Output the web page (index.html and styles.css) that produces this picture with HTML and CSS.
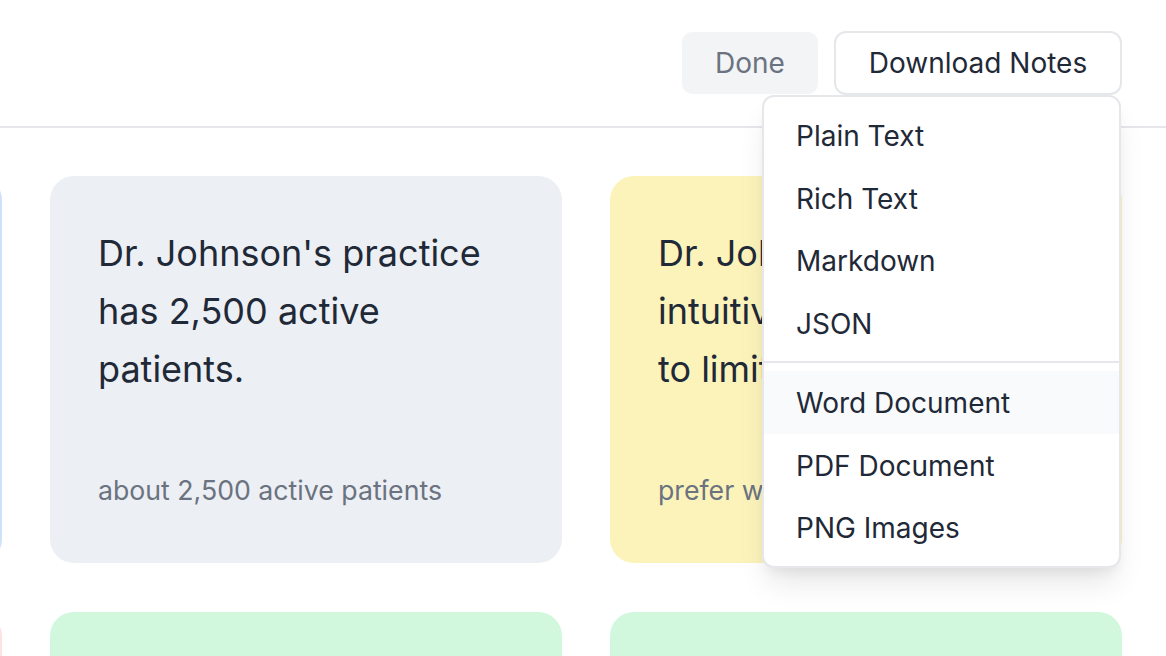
FILE: index.html
```html
<!DOCTYPE html>
<html lang="en">
<head>
<meta charset="utf-8">
<title>Notes</title>
<link rel="stylesheet" href="styles.css">
</head>
<body>
<header class="topbar">
  <div class="actions">
    <button class="btn btn-done">Done</button>
    <div class="menu-wrap">
      <button class="btn btn-download">Download Notes</button>
      <div class="menu">
        <div class="menu-item">Plain Text</div>
        <div class="menu-item">Rich Text</div>
        <div class="menu-item">Markdown</div>
        <div class="menu-item">JSON</div>
        <div class="menu-divider"></div>
        <div class="menu-item active">Word Document</div>
        <div class="menu-item">PDF Document</div>
        <div class="menu-item">PNG Images</div>
      </div>
    </div>
  </div>
</header>
<main class="board">
  <div class="grid">
    <div class="card blue"></div>
    <div class="card gray">
      <p class="card-title">Dr. Johnson's practice has 2,500 active patients.</p>
      <p class="card-sub">about 2,500 active patients</p>
    </div>
    <div class="card yellow">
      <p class="card-title">Dr. Johnson prefers<br>intuitive paper notes<br>to limit screen time.</p>
      <p class="card-sub">prefer working on paper</p>
    </div>
    <div class="card pink"></div>
    <div class="card green"></div>
    <div class="card green"></div>
  </div>
</main>
</body>
</html>
```
FILE: styles.css
```css
* { box-sizing: border-box; }
html, body { margin: 0; padding: 0; }
body {
  width: 1166px;
  height: 656px;
  overflow: hidden;
  background: #ffffff;
  font-family: Inter, "Noto Sans", "Liberation Sans", sans-serif;
  color: #1f2937;
}
.topbar {
  height: 128px;
  border-bottom: 2px solid #e5e7eb;
  display: flex;
  justify-content: flex-end;
  align-items: flex-start;
  padding: 31px 44px 0 0;
}
.actions {
  display: flex;
  align-items: center;
  gap: 16px;
}
.btn {
  font-family: inherit;
  font-size: 28px;
  line-height: 40px;
  cursor: pointer;
}
.btn-done {
  background: #f3f4f6;
  color: #6b7280;
  border: none;
  border-radius: 10px;
  height: 62px;
  width: 136px;
  padding: 0;
}
.menu-wrap { position: relative; }
.btn-download {
  background: #ffffff;
  color: #1f2937;
  border: 2px solid #e5e7eb;
  border-radius: 12px;
  height: 64px;
  width: 288px;
  padding: 0;
}
.menu {
  position: absolute;
  top: 64px;
  right: 1px;
  width: 359px;
  background: #ffffff;
  border: 2px solid #e5e7eb;
  border-radius: 12px;
  padding: 7px 0;
  box-shadow: 0 20px 30px -6px rgba(0,0,0,0.10), 0 8px 12px -4px rgba(0,0,0,0.06);
  z-index: 10;
}
.menu-item {
  font-size: 28px;
  line-height: 40px;
  padding: 12px 32px 10.5px;
  color: #1f2937;
}
.menu-item.active { background: #f9fafb; }
.menu-divider {
  height: 2px;
  background: #e5e7eb;
  margin: 7px 0 8px;
}
.board {
  overflow: hidden;
  padding-top: 48px;
}
.grid {
  display: grid;
  grid-template-columns: repeat(3, 512px);
  grid-auto-rows: 387px;
  column-gap: 48px;
  row-gap: 49px;
  margin-left: -510px;
}
.card {
  border-radius: 24px;
  padding: 48px 48px 53px;
  display: flex;
  flex-direction: column;
  overflow: hidden;
}
.card-title {
  margin: 0;
  font-size: 36px;
  line-height: 58px;
  color: #1f2937;
}
.card-sub {
  margin: auto 0 0;
  font-size: 26.7px;
  line-height: 40px;
  color: #6b7280;
}
.blue { background: #dbeafe; border: 2px solid #cfe1fb; }
.gray { background: #eceff3; }
.yellow { background: #fcf3bb; }
.pink { background: #fee2e2; }
.green { background: #d1f7dd; }
```
